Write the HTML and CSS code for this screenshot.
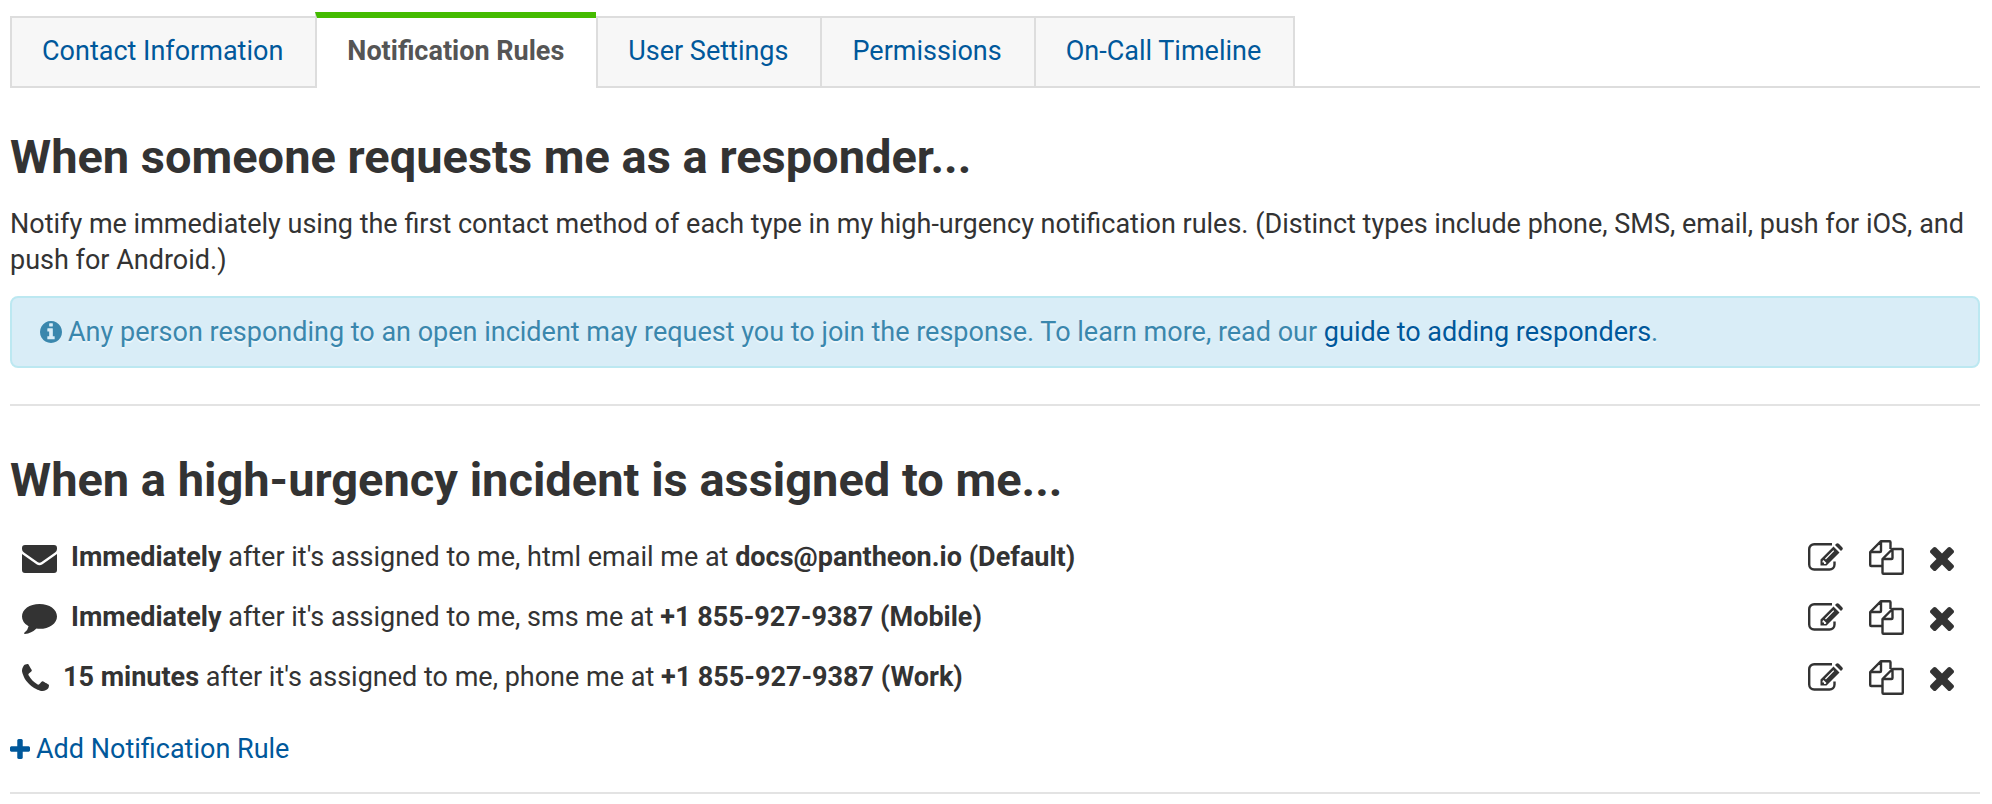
FILE: index.html
```html
<!DOCTYPE html>
<html lang="en">
<head>
<meta charset="utf-8">
<title>Notification Rules</title>
<link rel="stylesheet" href="styles.css">
</head>
<body>
<svg class="sprite" aria-hidden="true">
  <symbol id="i-mail" viewBox="0 0 35 28"><path d="M3 0h29a3 3 0 0 1 3 3v1q0 2-2 3.500L19.500 17q-2 1.400-4 0L2 7.500Q0 6 0 4V3a3 3 0 0 1 3-3zM0 9l14.500 10.300q3 2 6 0L35 9V25a3 3 0 0 1-3 3H3a3 3 0 0 1-3-3z"/></symbol>
  <symbol id="i-comment" viewBox="0 0 35 30"><path d="M17.500 0C27.500 0 35 5.500 35 12.400S27.500 24.800 17.500 24.800q-1.500 0-3-.2Q9.500 29.500 2.800 30q-1.300-.2-.5-1.300Q6 26 6.600 22.300 0 18.500 0 12.400C0 5.500 7.500 0 17.500 0z"/></symbol>
  <symbol id="i-phone" viewBox="192 128 1408 1408"><path d="M1600 1240q0 27-10 70.500t-21 68.500q-21 50-122 106-94 51-186 51-27 0-53-3.500t-57.500-12.500-47-14.500-55.500-20.500-49-18q-98-35-175-83-127-79-264-216t-216-264q-48-77-83-175-3-9-18-49t-20.500-55.500-14.500-47-12.500-57.500-3.500-53q0-92 51-186 56-101 106-122 25-11 68.500-21t70.500-10q14 0 21 3 18 6 53 76 11 19 30 54t35 63.500 31 53.500q3 4 17.500 25t21.500 35.500 7 28.500q0 20-28.500 50t-62 55-62 53-28.500 46q0 9 5 22.500t8.500 20.500 14 24 11.500 19q76 137 174 235t235 174q2 1 19 11.500t24 14 20.500 8.500 22.500 5q18 0 46-28.500t53-62 55-62 50-28.500q14 0 28.500 7t35.500 21.500 25 17.500q25 15 53.500 31t63.500 35 54 30q70 35 76 53 3 7 3 21z"/></symbol>
  <symbol id="i-edit" viewBox="0 0 35 28">
    <path d="M24 1.200H6.200a5 5 0 0 0-5 5v15.300a5 5 0 0 0 5 5h15.300a5 5 0 0 0 5-5V18.500" fill="none" stroke="currentColor" stroke-width="2.400"/>
    <path fill-rule="evenodd" d="M12.500 22.500v-6L25.500 3.500l6 6-13 13zM14.500 18v1.500h1.500v1.500h1.500l1-1-3-3zM17 15.500l.9.900 8.300-8.300-.9-.9z"/>
    <path d="M27 2l1.200-1.200q1.300-1.300 2.600 0l3.400 3.400q1.300 1.300 0 2.600L33 8z"/>
  </symbol>
  <symbol id="i-copy" viewBox="0 0 35 35"><path d="M13.500 26H2.200q-1 0-1-1V12L12 1.200h8.500q1 0 1 1V9M12 1.200V11q0 1-1 1H1.200M33.800 10v22.800q0 1-1 1H14.500q-1 0-1-1V19L23.500 9h9.300q1 0 1 1zM23.500 9v9q0 1-1 1h-9" fill="none" stroke="currentColor" stroke-width="2.400" stroke-linejoin="round"/></symbol>
  <symbol id="i-times" viewBox="302 366 1188 1188"><path d="M1490 1322q0 40-28 68l-136 136q-28 28-68 28t-68-28l-294-294-294 294q-28 28-68 28t-68-28l-136-136q-28-28-28-68t28-68l294-294-294-294q-28-28-28-68t28-68l136-136q28-28 68-28t68 28l294 294 294-294q28-28 68-28t68 28l136 136q28 28 28 68t-28 68l-294 294 294 294q28 28 28 68z"/></symbol>
  <symbol id="i-plus" viewBox="192 128 1408 1408"><path d="M1600 736v192q0 40-28 68t-68 28h-416v416q0 40-28 68t-68 28h-192q-40 0-68-28t-28-68v-416h-416q-40 0-68-28t-28-68v-192q0-40 28-68t68-28h416v-416q0-40 28-68t68-28h192q40 0 68 28t28 68v416h416q40 0 68 28t28 68z"/></symbol>
  <symbol id="i-info" viewBox="128 128 1536 1536"><path d="M1152 1376v-160q0-14-9-23t-23-9h-96v-512q0-14-9-23t-23-9h-320q-14 0-23 9t-9 23v160q0 14 9 23t23 9h96v320h-96q-14 0-23 9t-9 23v160q0 14 9 23t23 9h448q14 0 23-9t9-23zm-128-896v-160q0-14-9-23t-23-9h-192q-14 0-23 9t-9 23v160q0 14 9 23t23 9h192q14 0 23-9t9-23zm640 416q0 209-103 385.500t-279.500 279.500-385.500 103-385.500-103-279.500-279.500-103-385.500 103-385.500 279.500-279.500 385.500-103 385.500 103 279.500 279.500 103 385.500z"/></symbol>
</svg>

<nav class="tabs" aria-label="Profile sections">
  <a class="tab" href="#contact">Contact Information</a>
  <a class="tab tab-active" href="#rules" aria-current="page">Notification Rules</a>
  <a class="tab" href="#settings">User Settings</a>
  <a class="tab" href="#permissions">Permissions</a>
  <a class="tab" href="#timeline">On-Call Timeline</a>
</nav>

<main>
  <section class="section">
    <h2 class="title">When someone requests me as a responder...</h2>
    <p class="text">Notify me immediately using the first contact method of each type in my high-urgency notification rules. (Distinct types include phone, SMS, email, push for iOS, and push for Android.)</p>
    <p class="alert"><svg class="icon icon-info" aria-hidden="true"><use href="#i-info"/></svg><span>Any person responding to an open incident may request you to join the response. To learn more, read our <a class="alert-link" href="#guide">guide to adding responders</a>.</span></p>
  </section>

  <section class="section section-rules">
    <h2 class="title">When a high-urgency incident is assigned to me...</h2>
    <ul class="rules">
      <li class="rule">
        <svg class="icon icon-mail" aria-hidden="true"><use href="#i-mail"/></svg>
        <span class="rule-text"><b>Immediately</b> after it's assigned to me, html email me at <b>docs@pantheon.io (Default)</b></span>
        <span class="actions">
          <button class="action" type="button" aria-label="Edit"><svg class="icon icon-edit"><use href="#i-edit"/></svg></button>
          <button class="action" type="button" aria-label="Copy"><svg class="icon icon-copy"><use href="#i-copy"/></svg></button>
          <button class="action" type="button" aria-label="Delete"><svg class="icon icon-times"><use href="#i-times"/></svg></button>
        </span>
      </li>
      <li class="rule">
        <svg class="icon icon-comment" aria-hidden="true"><use href="#i-comment"/></svg>
        <span class="rule-text"><b>Immediately</b> after it's assigned to me, sms me at <b>+1 855-927-9387 (Mobile)</b></span>
        <span class="actions">
          <button class="action" type="button" aria-label="Edit"><svg class="icon icon-edit"><use href="#i-edit"/></svg></button>
          <button class="action" type="button" aria-label="Copy"><svg class="icon icon-copy"><use href="#i-copy"/></svg></button>
          <button class="action" type="button" aria-label="Delete"><svg class="icon icon-times"><use href="#i-times"/></svg></button>
        </span>
      </li>
      <li class="rule">
        <svg class="icon icon-phone" aria-hidden="true"><use href="#i-phone"/></svg>
        <span class="rule-text"><b>15 minutes</b> after it's assigned to me, phone me at <b>+1 855-927-9387 (Work)</b></span>
        <span class="actions">
          <button class="action" type="button" aria-label="Edit"><svg class="icon icon-edit"><use href="#i-edit"/></svg></button>
          <button class="action" type="button" aria-label="Copy"><svg class="icon icon-copy"><use href="#i-copy"/></svg></button>
          <button class="action" type="button" aria-label="Delete"><svg class="icon icon-times"><use href="#i-times"/></svg></button>
        </span>
      </li>
    </ul>
    <a class="add" href="#add"><svg class="icon icon-plus" aria-hidden="true"><use href="#i-plus"/></svg>Add Notification Rule</a>
  </section>
</main>
</body>
</html>
```
FILE: styles.css
```css
* { box-sizing: border-box; }

body {
  margin: 0;
  padding: 12px 12px 0 10px;
  background: #fff;
  color: #333;
  font: 27px/36px Roboto, "Liberation Sans", sans-serif;
}

a { color: #00589b; text-decoration: none; }

.sprite { display: none; }
.icon { display: block; flex: none; fill: currentColor; }

.tabs {
  display: flex;
  align-items: flex-end;
  box-shadow: inset 0 -2px #ddd;
}

.tab {
  padding: 15px 32px 17px 30px;
  border: 2px solid #ddd;
  border-right-width: 0;
  background: #f7f7f7;
}

.tab:last-child { border-right-width: 2px; }

.tab-active {
  padding-bottom: 19px;
  border-top: 6px solid #4b0;
  border-bottom: 0;
  background: #fff;
  color: #555;
  font-weight: bold;
}

.section {
  padding-bottom: 36px;
  border-bottom: 2px solid #e3e3e3;
}

.title {
  margin: 0;
  padding: 40px 0 20px;
  font-size: 47px;
  line-height: 58px;
}

.text { margin: 0 0 18px; }

.alert {
  display: flex;
  align-items: flex-start;
  gap: 6px;
  margin: 0;
  padding: 16px 28px;
  border: 2px solid #bce8f1;
  border-radius: 8px;
  background: #d9edf7;
  color: #3a87ad;
  text-shadow: 0 2px 0 rgba(255, 255, 255, .5);
}

.section-rules { padding: 5px 0 25px; }
.section-rules .title { padding-bottom: 18px; }

.rules {
  margin: 0;
  padding: 0;
  list-style: none;
}

.rule {
  display: flex;
  align-items: center;
  gap: 14px;
  height: 60px;
  padding: 0 26px 0 12px;
}

.rule-text { flex: 1; }

.actions {
  display: flex;
  align-items: center;
  gap: 26px;
}

.action {
  display: block;
  padding: 0;
  border: 0;
  background: none;
  color: inherit;
}

.add {
  display: flex;
  align-items: center;
  gap: 6px;
  margin-top: 24px;
}

.icon-info { width: 22px; height: 22px; margin-top: 7px; }
.icon-mail { width: 35px; height: 28px; margin-top: 4px; }
.icon-comment { width: 35px; height: 30px; margin-top: 4px; }
.icon-phone { width: 27px; height: 27px; }
.icon-edit { width: 35px; height: 28px; }
.icon-copy { width: 35px; height: 35px; }
.icon-times { width: 24px; height: 24px; margin-top: 4px; }
.icon-plus { width: 20px; height: 20px; }
```
